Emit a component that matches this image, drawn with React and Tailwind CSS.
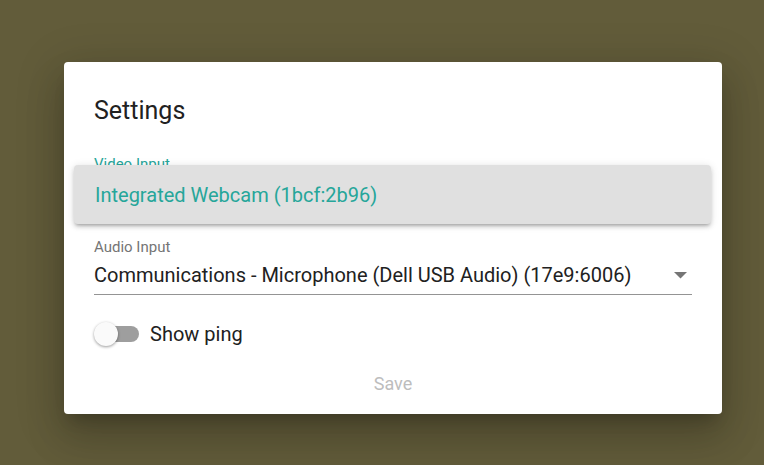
import React from "react";

function Arrow() {
  return (
    <svg width="13" height="7" viewBox="0 0 13 7" className="shrink-0">
      <path d="M0 0 L13 0 L6.5 6.5 Z" fill="#757575" />
    </svg>
  );
}

function Field({ label, value, labelClass }) {
  return (
    <div className="flex flex-col">
      <div className={`text-[15px] leading-[18px] ${labelClass}`}>{label}</div>
      <div className="mt-[7px] flex items-center justify-between border-b border-[#949494] pb-[7px]">
        <span className="text-[20px] leading-[24px] text-[#212121]">{value}</span>
        <span className="mr-[5px] flex items-center">
          <Arrow />
        </span>
      </div>
    </div>
  );
}

export default function App() {
  return (
    <div
      className="w-[764px] h-[465px] overflow-hidden bg-[#625c3a] pt-[62px] pl-[64px]"
      style={{ fontFamily: "Roboto, 'Noto Sans', sans-serif" }}
    >
      <div className="relative w-[658px] h-[352px] rounded-[4px] bg-white px-[30px] pt-[33px] shadow-[0_11px_15px_-7px_rgba(0,0,0,0.2),0_24px_38px_3px_rgba(0,0,0,0.14),0_9px_46px_8px_rgba(0,0,0,0.12)]">
        <h2 className="text-[25px] leading-[32px] text-[#212121]">Settings</h2>

        <div className="mt-[28px]">
          <Field
            label="Video Input"
            value="Integrated Webcam (1bcf:2b96)"
            labelClass="text-[#26a69a]"
          />
        </div>

        <div className="mt-[26px]">
          <Field
            label="Audio Input"
            value="Communications - Microphone (Dell USB Audio) (17e9:6006)"
            labelClass="text-[#757575]"
          />
        </div>

        <div className="mt-[19px] flex h-[40px] items-center">
          <div className="relative flex h-[24px] w-[46px] items-center">
            <div className="ml-[4px] h-[16px] w-[41px] rounded-full bg-[#9e9e9e]" />
            <div className="absolute left-0 top-0 h-[24px] w-[24px] rounded-full bg-[#fafafa] shadow-[0_1px_3px_rgba(0,0,0,0.4)]" />
          </div>
          <span className="ml-[10px] text-[20px] leading-[24px] text-[#212121]">Show ping</span>
        </div>

        <div className="mt-[18px] flex justify-center">
          <span className="text-[18px] leading-[24px] text-[#bdbdbd]">Save</span>
        </div>

        <div className="absolute left-[10px] top-[103px] flex h-[59px] w-[637px] items-center rounded-[4px] bg-[#e0e0e0] pl-[21px] shadow-[0_3px_3px_-2px_rgba(0,0,0,0.2),0_3px_4px_0_rgba(0,0,0,0.14),0_1px_8px_0_rgba(0,0,0,0.12)]">
          <span className="text-[20px] leading-[24px] text-[#26a69a]">Integrated Webcam (1bcf:2b96)</span>
        </div>
      </div>
    </div>
  );
}
